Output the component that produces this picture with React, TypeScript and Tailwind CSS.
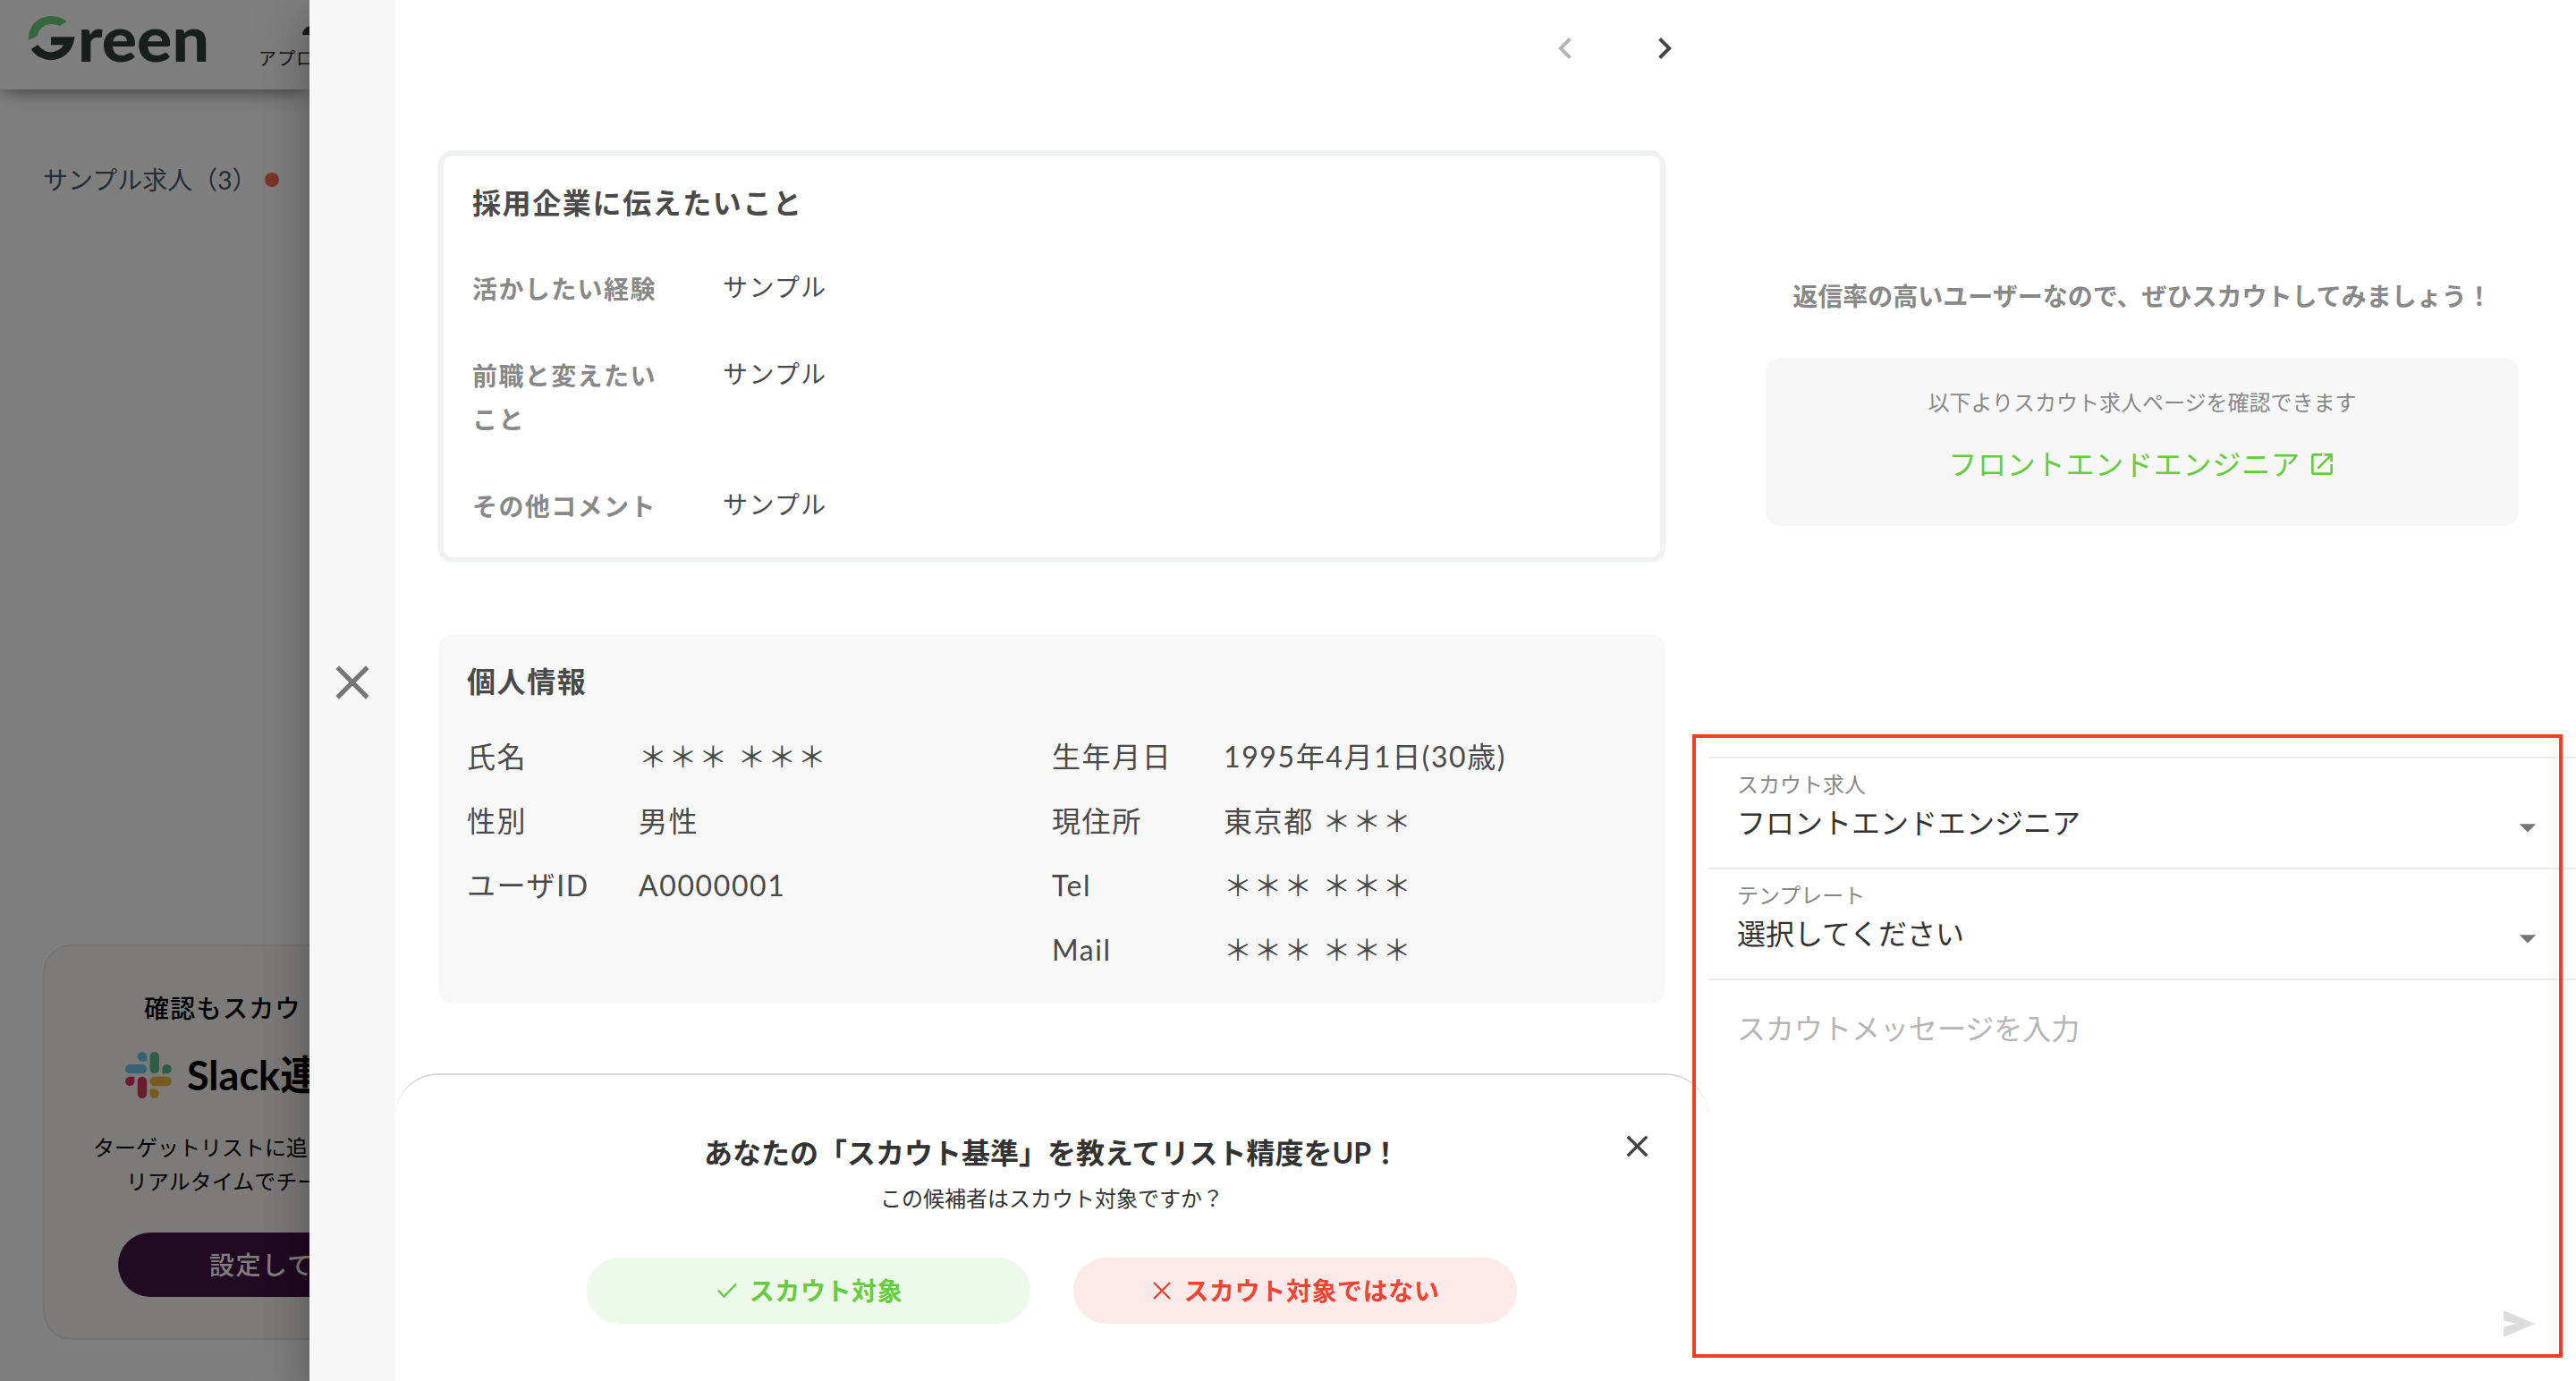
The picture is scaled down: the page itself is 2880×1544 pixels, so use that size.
import React from 'react'
import { MdArrowDropDown, MdChevronLeft, MdChevronRight, MdClose, MdOpenInNew } from 'react-icons/md';

// label / value rows of the "message to companies" card
const appealRows = [
  { label: '活かしたい経験', value: 'サンプル' },
  { label: '前職と変えたいこと', value: 'サンプル' },
  { label: 'その他コメント', value: 'サンプル' },
];

const profileLeft = [
  { label: '氏名', value: '＊＊＊ ＊＊＊' },
  { label: '性別', value: '男性' },
  { label: 'ユーザID', value: 'A0000001' },
];

const profileRight = [
  { label: '生年月日', value: '1995年4月1日(30歳)' },
  { label: '現住所', value: '東京都 ＊＊＊' },
  { label: 'Tel', value: '＊＊＊ ＊＊＊' },
  { label: 'Mail', value: '＊＊＊ ＊＊＊' },
];

const GreenLogo = () => (
  <svg width="206" height="56" viewBox="0 0 206 56" className="shrink-0" fill="none">
    <path d="M1 29C0 12 12 2 27 2c6 0 12 2 17 6l-8 5c-3-1-6-2-9-2-9 0-15 6-16 13Z" fill="#6cd07a" />
    <path d="M7.6 36.5A21.6 21.6 0 0 0 47 29.8H26" stroke="#2f3c38" strokeWidth="9" />
    <text x="56" y="53" fontSize="71" textLength="147" lengthAdjust="spacingAndGlyphs" fontWeight="900" fill="#2f3c38" className="font-[Lato,sans-serif]">
      reen
    </text>
  </svg>
);

const SlackLogo = () => (
  <svg width="52" height="52" viewBox="0 0 54 54" className="shrink-0">
    <path fill="#6cc5ec" d="M19.7.1a5.4 5.4 0 0 0-5.4 5.4 5.4 5.4 0 0 0 5.4 5.4h5.4V5.5A5.4 5.4 0 0 0 19.7.1m0 14.4H5.4A5.4 5.4 0 0 0 0 19.9a5.4 5.4 0 0 0 5.4 5.4h14.3a5.4 5.4 0 0 0 5.4-5.4 5.4 5.4 0 0 0-5.4-5.4" />
    <path fill="#5cb888" d="M53.8 19.9a5.4 5.4 0 0 0-5.4-5.4 5.4 5.4 0 0 0-5.4 5.4v5.4h5.4a5.4 5.4 0 0 0 5.4-5.4m-14.4 0V5.5A5.4 5.4 0 0 0 34 .1a5.4 5.4 0 0 0-5.4 5.4v14.4a5.4 5.4 0 0 0 5.4 5.4 5.4 5.4 0 0 0 5.4-5.4" />
    <path fill="#ecb83e" d="M34 54a5.4 5.4 0 0 0 5.4-5.4 5.4 5.4 0 0 0-5.4-5.4h-5.4v5.4A5.4 5.4 0 0 0 34 54m0-14.4h14.4a5.4 5.4 0 0 0 5.4-5.4 5.4 5.4 0 0 0-5.4-5.4H34a5.4 5.4 0 0 0-5.4 5.4 5.4 5.4 0 0 0 5.4 5.4" />
    <path fill="#d8365f" d="M0 34.2a5.4 5.4 0 0 0 5.4 5.4 5.4 5.4 0 0 0 5.4-5.4v-5.4H5.4A5.4 5.4 0 0 0 0 34.2m14.3 0v14.4a5.4 5.4 0 0 0 5.4 5.4 5.4 5.4 0 0 0 5.4-5.4V34.2a5.4 5.4 0 0 0-5.4-5.4 5.4 5.4 0 0 0-5.4 5.4" />
  </svg>
);

// the page behind the drawer, dimmed by the backdrop
const Background = () => (
  <div className="relative flex h-full w-[346px] shrink-0 flex-col overflow-hidden bg-white whitespace-nowrap">
    <header className="flex h-[100px] shrink-0 shadow-[0_6px_20px_-4px_rgba(0,0,0,0.55)]">
      <div className="pt-4 pl-[31px]">
        <GreenLogo />
      </div>
      <div className="flex flex-col items-start pt-[29px] pl-[52px]">
        <span className="ml-[49px] h-2.5 w-6 rounded-t-full bg-[#333]" />
        <span className="mt-[11px] text-[20px] leading-[30px] tracking-[1px] text-[#333]">アプロ</span>
      </div>
    </header>
    <div className="mt-[81px] flex items-center pl-12">
      <span className="text-[28px] leading-10 text-[#4a5a6c]">サンプル求人（3）</span>
      <span className="ml-[9px] size-4 shrink-0 rounded-full bg-[#f86a58]" />
    </div>
    <div className="mt-auto mb-[46px] ml-12 h-[442px] w-[600px] shrink-0 rounded-[32px] border-2 border-[#ebe7e3] bg-[#faf6f2]">
      <p className="mt-[49px] ml-[111px] text-[28px] leading-10 font-medium tracking-[1.3px] text-black">確認もスカウ</p>
      <div className="mt-[29px] ml-[90px] flex h-[52px] items-center">
        <SlackLogo />
        <span className="ml-[17px] text-[45px] leading-[52px] font-bold text-black">Slack連</span>
      </div>
      <p className="mt-[36px] ml-[54px] text-[24px] leading-[38px] text-black">ターゲットリストに追</p>
      <p className="ml-[91px] text-[24px] leading-[38px] text-black">リアルタイムでチー</p>
      <div className="mt-[38px] ml-[82px] flex h-[72px] w-[436px] items-center rounded-full bg-[#451446] pl-[102px] text-[28px] font-medium tracking-[1.4px] text-white">
        設定して
      </div>
    </div>
    <div className="absolute inset-0 bg-black/50" />
  </div>
);

const ProfileColumn = ({ rows }: { rows: { label: string; value: string }[] }) => (
  <dl className="flex flex-1 flex-col gap-8">
    {rows.map((row) => (
      <div key={row.label} className="flex text-[32px] leading-10 tracking-[1.6px]">
        <dt className="w-48 shrink-0">{row.label}</dt>
        <dd>{row.value}</dd>
      </div>
    ))}
  </dl>
);

const SelectField = ({ label, value }: { label: string; value: string }) => (
  <div className="flex h-[124px] shrink-0 justify-between border-t-2 border-[#ebebeb] pr-8 pl-8">
    <div className="pt-[11px]">
      <div className="text-[24px] leading-9 text-[#888]">{label}</div>
      <div className="mt-px text-[32px] leading-[48px] text-[#333]">{value}</div>
    </div>
    <MdArrowDropDown className="mt-[55px] size-11 text-[#757575]" />
  </div>
);

const FeedbackSheet = () => (
  <div className="relative mt-auto flex h-[344px] shrink-0 flex-col items-center rounded-t-[48px] border-t-2 border-[#d8d8d8] bg-white text-[#333]">
    <h3 className="mt-[63px] text-[32px] leading-[48px] font-bold">あなたの「スカウト基準」を教えてリスト精度をUP！</h3>
    <p className="mt-[9px] text-[24px] leading-9">この候補者はスカウト対象ですか？</p>
    <div className="mt-12 flex gap-12">
      <button className="flex h-[74px] w-[496px] items-center justify-center rounded-full bg-[#edf9ea] pl-[3px] text-[28px] font-bold tracking-[0.6px] text-[#66cc3f]">
        <svg width="22" height="18" viewBox="0 0 22 18" className="mr-3.5" fill="none" stroke="currentColor" strokeWidth="2.4">
          <path d="M1 8.6 7.4 15.6 21 1.6" />
        </svg>
        スカウト対象
      </button>
      <button className="flex h-[74px] w-[496px] items-center justify-center rounded-full bg-[#fceaea] pl-[3px] text-[28px] font-bold tracking-[0.6px] text-[#ee4433]">
        <svg width="20" height="20" viewBox="0 0 20 20" className="mr-3.5" fill="none" stroke="currentColor" strokeWidth="2.4">
          <path d="M1 1 19 19M19 1 1 19" />
        </svg>
        スカウト対象ではない
      </button>
    </div>
    <MdClose className="absolute top-[59px] right-[59px] size-[41px] text-[#444]" />
  </div>
);

const App = () => {
  return (
    <div className="relative flex h-[1544px] w-[2880px] overflow-hidden bg-white font-[Lato,'Noto_Sans_CJK_JP',sans-serif]">
      <Background />

      {/* drawer */}
      <div className="z-10 flex h-full flex-1 bg-white shadow-[0_16px_20px_-10px_rgba(0,0,0,0.2),0_32px_48px_4px_rgba(0,0,0,0.14),0_12px_60px_10px_rgba(0,0,0,0.12)]">
        <div className="flex w-24 shrink-0 items-center justify-center bg-[#f7f7f7] pb-[18px]">
          <MdClose className="size-16 text-[#777]" />
        </div>

        <main className="flex w-[1468px] shrink-0 flex-col">
          <div className="flex h-[108px] shrink-0 items-center justify-end gap-[63px] pr-[25px]">
            <MdChevronLeft className="size-12 text-[#b5b5b5]" />
            <MdChevronRight className="size-12 text-[#444]" />
          </div>

          <section className="mx-12 mt-[60px] h-[461px] shrink-0 rounded-2xl border-[6px] border-[#f0f1f2] px-8 pt-[29px] text-[#4a4a4a]">
            <h2 className="text-[32px] leading-[48px] font-bold tracking-[1.6px]">採用企業に伝えたいこと</h2>
            <dl className="mt-12 flex flex-col gap-12 text-[28px] tracking-[1.4px]">
              {appealRows.map((row) => (
                <div key={row.label} className="flex">
                  <dt className="mr-[60px] w-[220px] leading-[49px] font-bold text-[#888]">{row.label}</dt>
                  <dd className="leading-[45px]">{row.value}</dd>
                </div>
              ))}
            </dl>
          </section>

          <section className="mx-12 mt-20 h-[413px] shrink-0 rounded-2xl bg-[#f8f8f8] px-8 pt-[29px] text-[#4a4a4a]">
            <h2 className="text-[32px] leading-[48px] font-bold tracking-[1.6px]">個人情報</h2>
            <div className="mt-10 flex">
              <ProfileColumn rows={profileLeft} />
              <ProfileColumn rows={profileRight} />
            </div>
          </section>

          <FeedbackSheet />
        </main>

        <aside className="flex flex-1 flex-col">
          <p className="mt-[310px] text-center text-[28px] leading-[42px] font-bold text-[#888]">
            返信率の高いユーザーなので、ぜひスカウトしてみましょう！
          </p>
          <div className="mx-16 mt-12 flex h-[188px] shrink-0 flex-col items-center rounded-2xl bg-[#f7f7f7] pt-8">
            <p className="text-[24px] leading-9 text-[#888]">以下よりスカウト求人ページを確認できます</p>
            <a className="mt-[27px] flex items-center text-[32px] leading-[48px] tracking-[0.8px] text-[#66cc3f]">
              フロントエンドエンジニア
              <MdOpenInNew className="ml-2 size-8" />
            </a>
          </div>

          <div className="mt-auto flex h-[698px] shrink-0 flex-col">
            <SelectField label="スカウト求人" value="フロントエンドエンジニア" />
            <SelectField label="テンプレート" value="選択してください" />
            <div className="flex flex-1 flex-col border-t-2 border-[#ebebeb] px-8 pt-[30px] text-[32px] leading-[48px] text-[#b5b5b5]">
              スカウトメッセージを入力
              <svg width="35" height="30" viewBox="0 0 35 30" className="mt-auto mr-[14px] mb-[49px] self-end" fill="#ddd">
                <path d="M0 0 35 15 0 30V18.6L15 15 0 11.4Z" />
              </svg>
            </div>
          </div>
        </aside>
      </div>

      {/* highlight around the message form */}
      <div className="absolute top-[821px] left-[1892px] z-20 h-[697px] w-[973px] border-4 border-[#ee4026]" />
    </div>
  );
}

export default App
